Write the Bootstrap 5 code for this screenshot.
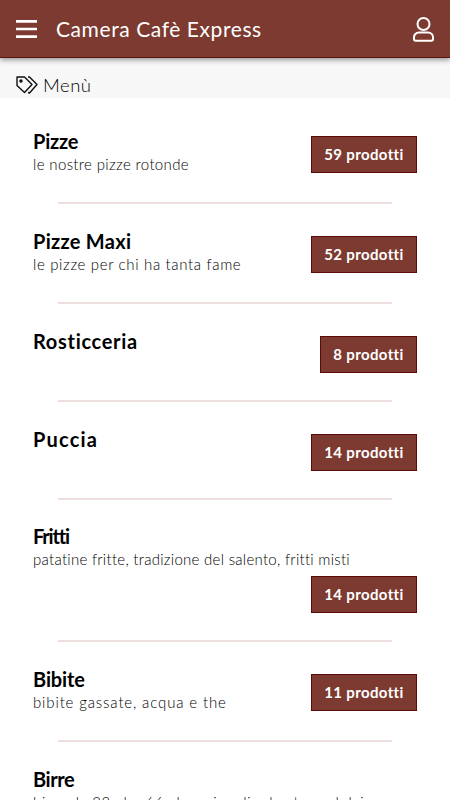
<!DOCTYPE html>
<html lang="it">
<head>
<meta charset="utf-8">
<meta name="viewport" content="width=device-width, initial-scale=1">
<title>Camera Cafè Express</title>
<link href="https://cdn.jsdelivr.net/npm/bootstrap@5.3.0/dist/css/bootstrap.min.css" rel="stylesheet">
<style>
  html, body { height: 800px; overflow: hidden; }
  body { font-family: Lato, sans-serif; color: #000; background: #fff; font-variant-ligatures: none; }
  .top-bar { height: 58px; background: #7c3a31; border-bottom: 1px solid #5d1510; box-shadow: 0 2px 5px rgba(0,0,0,.4); padding: 1px 16px 0; z-index: 2; }
  .brand { font-size: 21px; font-weight: 400; line-height: 30px; margin-left: 19px; letter-spacing: .58px; }
  .crumb { height: 40px; background: #f7f7f7; padding: 14px 16px 0; font-size: 18.5px; font-weight: 300; line-height: 24px; }
  .crumb span { letter-spacing: .5px; margin-left: 5px; }
  .menu-list { height: 702px; overflow: hidden; padding: 28px 33px 0; }
  .entry { height: 76px; }
  .entry.plain { height: 74px; }
  .entry.tall { height: 118px; }
  .entry h2 { font-size: 20px; font-weight: 700; line-height: 30px; margin: 0 0 -1px; }
  .entry.tall h2 { margin-top: -1px; }
  .entry p { font-size: 15px; font-weight: 300; line-height: 18px; margin: 0; white-space: nowrap; }
  .count { height: 37px; padding: 0; margin-top: 10px; border: 1px solid #5a0a08; border-radius: 0; background: #7c3a31; color: #fff; font-size: 15px; font-weight: 700; line-height: 35px; width: 106px; white-space: nowrap; letter-spacing: .36px; }
  .count.slim { width: 97px; }
  .tall .count { margin-top: 8px; }
  .rule { height: 2px; margin: 0 25px 22px; background: #eddfde; }
  /* Tracking per title and description */
  .ls-a { letter-spacing: -.2px; } .ls-b { letter-spacing: .28px; } .ls-c { letter-spacing: .68px; }
  .ls-d { letter-spacing: 1.2px; } .ls-e { letter-spacing: -1.2px; } .ls-f { letter-spacing: -.1px; } .ls-g { letter-spacing: -.4px; }
  .ls-h { letter-spacing: .36px; } .ls-i { letter-spacing: .66px; } .ls-k { letter-spacing: .86px; }
</style>
</head>
<body>
<header class="top-bar d-flex align-items-center position-relative text-white">
  <svg width="21" height="20" viewBox="0 0 21 20" stroke="#fff" stroke-width="2.600" aria-hidden="true"><path d="M0 2.400h21M0 10h21M0 17.600h21"/></svg>
  <h1 class="brand mb-0"><span>Camera Cafè Express</span></h1>
  <svg class="ms-auto" width="21" height="25" viewBox="0 0 21 25" fill="none" stroke="#fff" stroke-width="2" aria-hidden="true"><circle cx="10.500" cy="7" r="6"/><path d="M6 15.500h9c3 0 5 2.300 5 4.800v1.700q0 1.700-1.700 1.700H2.700q-1.700 0-1.700-1.700v-1.700c0-2.500 2-4.800 5-4.800z"/></svg>
</header>
<div class="crumb d-flex align-items-center">
  <svg width="22" height="18" viewBox="0 0 22 18" fill="none" stroke="#111" stroke-width="1.400" stroke-linejoin="round" aria-hidden="true"><path d="M1 1h7.500l7.500 7.500L8.500 16.500 1 9.500z"/><path d="M12 1h1.500L21 8.500 13.500 17 12 16.500"/><circle cx="5" cy="5" r="1" fill="#111"/></svg>
  <span>Menù</span>
</div>
<main class="menu-list">
  <section class="entry d-flex justify-content-between align-items-start"><div><h2 class="ls-a">Pizze</h2><p class="ls-h">le nostre pizze rotonde</p></div><a class="count btn">59 prodotti</a></section>
  <div class="rule"></div>
  <section class="entry d-flex justify-content-between align-items-start"><div><h2 class="ls-b">Pizze Maxi</h2><p class="ls-i">le pizze per chi ha tanta fame</p></div><a class="count btn">52 prodotti</a></section>
  <div class="rule"></div>
  <section class="entry plain d-flex justify-content-between align-items-start"><h2 class="ls-c">Rosticceria</h2><a class="count slim btn">8 prodotti</a></section>
  <div class="rule"></div>
  <section class="entry plain d-flex justify-content-between align-items-start"><h2 class="ls-d">Puccia</h2><a class="count btn">14 prodotti</a></section>
  <div class="rule"></div>
  <section class="entry tall d-flex flex-column"><h2 class="ls-e">Fritti</h2><p class="ls-b">patatine fritte, tradizione del salento, fritti misti</p><a class="count btn align-self-end">14 prodotti</a></section>
  <div class="rule"></div>
  <section class="entry d-flex justify-content-between align-items-start"><div><h2 class="ls-f">Bibite</h2><p class="ls-k">bibite gassate, acqua e the</p></div><a class="count btn">11 prodotti</a></section>
  <div class="rule"></div>
  <section class="entry"><h2 class="ls-g">Birre</h2><p class="ls-i">birre da 33 cl e 66 cl, nazionali ed estere, dolci</p></section>
</main>
<script src="https://cdn.jsdelivr.net/npm/bootstrap@5.3.0/dist/js/bootstrap.bundle.min.js"></script>
</body>
</html>
